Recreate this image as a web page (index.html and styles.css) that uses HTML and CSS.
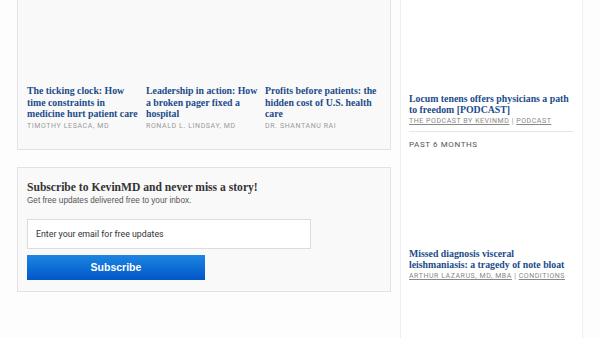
FILE: index.html
```html
<!DOCTYPE html>
<html lang="en">
<head>
    <meta charset="UTF-8">
    <title>KevinMD</title>
    <link rel="stylesheet" href="styles.css">
</head>
<body>

<div class="page">
    <div class="main">
        <!-- Related stories -->
        <div class="card related">
            <div class="story">
                <div class="thumb"></div>
                <a class="story-title" href="#">The ticking clock: How time constraints in medicine hurt patient care</a>
                <div class="byline">Timothy Lesaca, MD</div>
            </div>
            <div class="story">
                <div class="thumb"></div>
                <a class="story-title" href="#">Leadership in action: How a broken pager fixed a hospital</a>
                <div class="byline">Ronald L. Lindsay, MD</div>
            </div>
            <div class="story">
                <div class="thumb"></div>
                <a class="story-title" href="#">Profits before patients: the hidden cost of U.S. health care</a>
                <div class="byline">Dr. Shantanu Rai</div>
            </div>
        </div>

        <!-- Newsletter -->
        <div class="card subscribe">
            <h3>Subscribe to KevinMD and never miss a story!</h3>
            <p>Get free updates delivered free to your inbox.</p>
            <input type="email" placeholder="Enter your email for free updates">
            <button>Subscribe</button>
        </div>
    </div>

    <aside class="sidebar">
        <div class="side-thumb"></div>
        <a class="side-title" href="#">Locum tenens offers physicians a path to freedom [PODCAST]</a>
        <div class="side-meta"><a href="#">The Podcast by KevinMD</a> | <a href="#">Podcast</a></div>

        <div class="side-heading">Past 6 Months</div>

        <div class="side-thumb tall"></div>
        <a class="side-title" href="#">Missed diagnosis visceral leishmaniasis: a tragedy of note bloat</a>
        <div class="side-meta"><a href="#">Arthur Lazarus, MD, MBA</a> | <a href="#">Conditions</a></div>
    </aside>
</div>

</body>
</html>
```

FILE: styles.css
```css
body {
    margin: 0;
    padding: 0;
    background: #fdfdfd;
    font-family: Roboto, "Liberation Sans", Arial, sans-serif;
    overflow: hidden;
}

.page {
    display: flex;
    gap: 9px;
    padding-left: 17px;
}

.main {
    width: 374px;
}

.card {
    background: #f9f9f9;
    border: 1px solid #e2e2e2;
}

.related {
    margin-top: -20px;
    display: flex;
    gap: 3px;
    padding: 0 9px 18px;
}

.story {
    width: 117px;
}

.thumb {
    height: 104px;
}

.story-title, .side-title {
    display: block;
    font-family: "Liberation Serif", "Times New Roman", serif;
    font-weight: bold;
    font-size: 9.8px;
    line-height: 11.5px;
    color: #1b4c8a;
    text-decoration: none;
}

.byline {
    margin-top: 2px;
    font-size: 7px;
    line-height: 9px;
    letter-spacing: 0.6px;
    text-transform: uppercase;
    color: #999;
}

.subscribe {
    margin-top: 17px;
    padding: 13px 9px 11px;
}

.subscribe h3 {
    margin: 0;
    font-family: "Liberation Serif", "Times New Roman", serif;
    font-size: 11.6px;
    line-height: 14px;
    color: #333;
}

.subscribe p {
    margin: 0 0 13px;
    font-family: "Liberation Sans", Arial, sans-serif;
    font-size: 8.2px;
    line-height: 11px;
    color: #555;
}

.subscribe input {
    display: block;
    box-sizing: border-box;
    width: 284px;
    height: 30px;
    padding: 0 8px;
    border: 1px solid #dcdcdc;
    background: #fff;
    font-family: Roboto, "Liberation Sans", Arial, sans-serif;
    font-size: 8.8px;
}

.subscribe input::placeholder {
    color: #333;
}

.subscribe button {
    display: block;
    margin-top: 6px;
    width: 178px;
    height: 25px;
    border: none;
    background: linear-gradient(#1c86e0, #0256c9);
    color: #fff;
    font-family: "Liberation Sans", Arial, sans-serif;
    font-weight: bold;
    font-size: 10.5px;
}

.sidebar {
    width: 164px;
    margin-top: -10px;
    height: 360px;
    padding: 0 9px 0 8px;
    background: #fff;
    border-left: 1px solid #eee;
    border-right: 1px solid #eee;
}

.side-thumb {
    height: 103px;
}

.side-thumb.tall {
    height: 98px;
}

.side-title {
    line-height: 11px;
}

.side-meta {
    margin-top: 1px;
    padding-bottom: 5px;
    font-size: 7px;
    line-height: 10px;
    letter-spacing: 0.55px;
    text-transform: uppercase;
    color: #888;
}

.side-meta a {
    color: #888;
}

.side-heading {
    border-top: 1px solid #e6e6e6;
    padding-top: 8px;
    font-size: 8px;
    line-height: 10px;
    letter-spacing: 0.6px;
    text-transform: uppercase;
    color: #555;
}
```
